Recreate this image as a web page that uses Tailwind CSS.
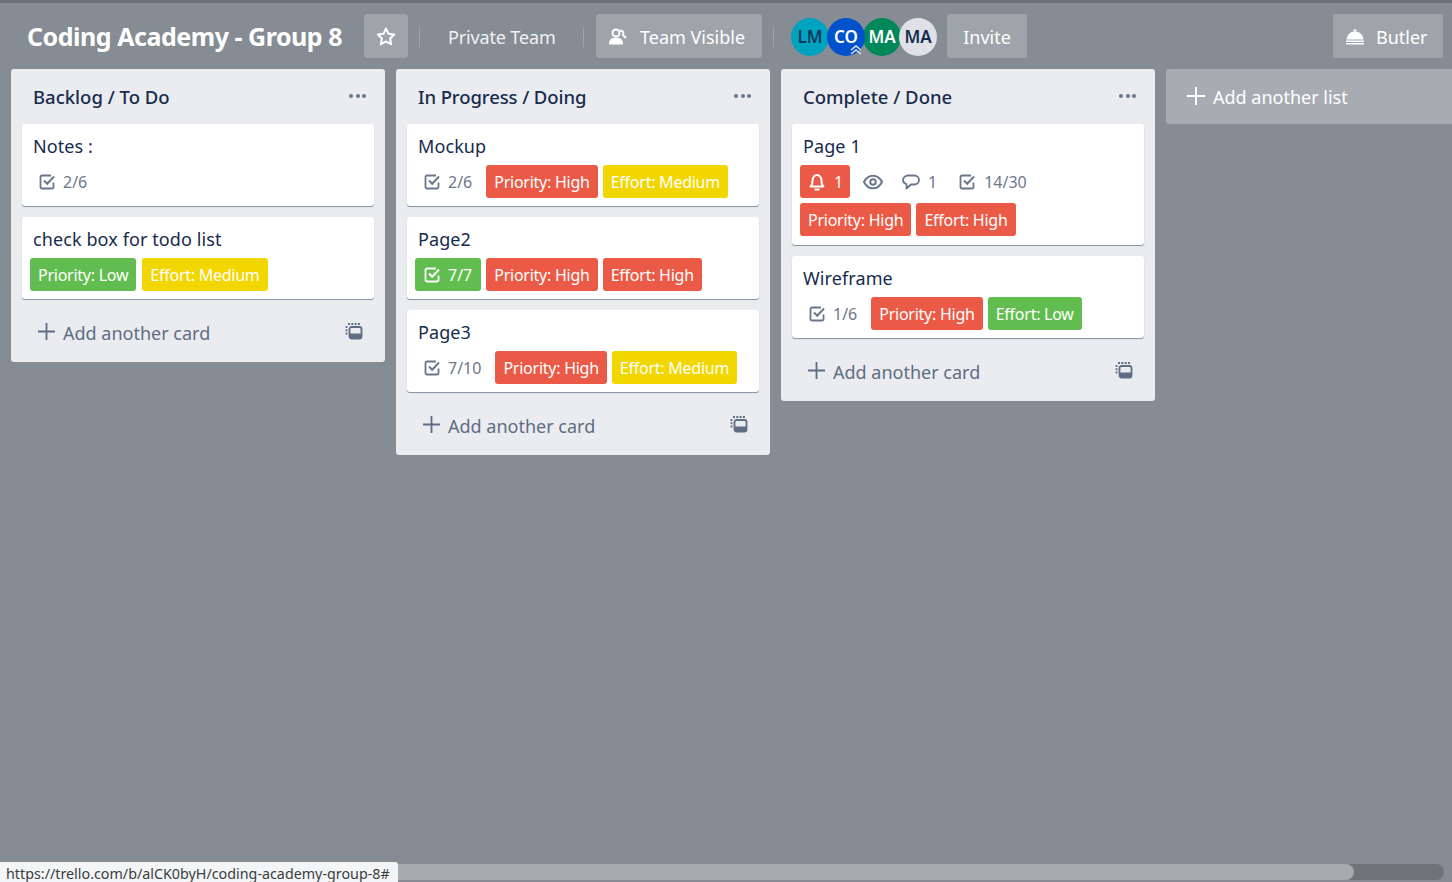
<!DOCTYPE html>
<html lang="en">
<head>
    <meta charset="UTF-8">
    <title>Coding Academy - Group 8</title>
    <script src="https://cdn.jsdelivr.net/npm/@tailwindcss/browser@4"></script>
</head>
<body class="relative w-[1452px] h-[882px] overflow-hidden bg-[#858c93] font-['Noto_Sans','Open_Sans',sans-serif] text-[#172b4d]">
<svg class="hidden">
    <symbol id="check" viewBox="0 0 18 18"><path d="M15.500 9.500V14a1.500 1.500 0 0 1-1.500 1.500H4A1.500 1.500 0 0 1 2.500 14V4A1.500 1.500 0 0 1 4 2.500h9" fill="none" stroke="currentColor" stroke-width="1.800"/><path d="M6 7.500 9.200 10.700 16 3.500" fill="none" stroke="currentColor" stroke-width="2"/></symbol>
    <symbol id="tpl" viewBox="0 0 18 18"><rect x="4.500" y="5" width="12" height="11.500" rx="2" fill="none" stroke="currentColor" stroke-width="1.800"/><rect x="4.500" y="11.500" width="12" height="5" rx="1" fill="currentColor"/><path d="M1.500 4v10" stroke="currentColor" stroke-width="1.800" stroke-dasharray="2 1.300"/><path d="M3 2h12" stroke="currentColor" stroke-width="1.800" stroke-dasharray="2 1.300"/></symbol>
</svg>

<div class="h-[3px] bg-[#6b7278]"></div>

<!-- header -->
<header class="flex items-center h-[44px] mt-[11px] pl-[27px] pr-[9px] text-white text-[18px]">
    <h1 class="text-[25px] font-bold mt-[2px] mr-[22px] whitespace-nowrap tracking-[-0.47px]">Coding Academy - Group 8</h1>
    <button class="w-[44px] h-[44px] pt-[2px] rounded-[3px] bg-[#9ea4a9] flex items-center justify-center">
        <svg width="20" height="20" viewBox="0 0 20 20" fill="none" stroke="white" stroke-width="2" stroke-linejoin="round"><path d="M10 1.500l2.500 5.200 5.700.8-4.100 4 1 5.700L10 14.500l-5.100 2.700 1-5.700-4.100-4 5.700-.8z"/></svg>
    </button>
    <div class="w-px h-[20px] bg-[#9ea4a9] mt-[2px] ml-[11px]"></div>
    <span class="ml-[28px] w-[135px] mt-[2px] whitespace-nowrap text-[#f1f2f3] tracking-[-0.15px]">Private Team</span>
    <div class="w-px h-[20px] bg-[#9ea4a9] mt-[2px]"></div>
    <button class="ml-[12px] h-[44px] w-[166px] pt-[2px] rounded-[3px] bg-[#9ea4a9] flex items-center pl-[12px] gap-[12px] whitespace-nowrap">
        <svg width="20" height="20" viewBox="0 0 20 20" fill="none" stroke="white" stroke-width="2"><circle cx="8" cy="6" r="3.500"/><path d="M12 3.500a3 3 0 0 1 3 4.500l3 3" /><path d="M2 16.500c0-3.500 2.500-5 6-5s6 1.500 6 5z" fill="white"/></svg>
        Team Visible
    </button>
    <div class="w-px h-[20px] bg-[#9ea4a9] mt-[2px] ml-[11px]"></div>
    <div class="flex ml-[17px] mt-[2px] text-[17px] font-semibold">
        <div class="w-[38px] h-[38px] rounded-full bg-[#00a3bf] text-[#0b3a5e] flex items-center justify-center">LM</div>
        <div class="relative -ml-[2px] w-[38px] h-[38px] rounded-full bg-[#0052cc] flex items-center justify-center">CO
            <svg class="absolute right-[3px] bottom-0" width="12" height="12" viewBox="0 0 12 12" fill="none" stroke="#dfe1e6" stroke-width="1.500"><path d="M1 6l5-4 5 4M1 10l5-4 5 4"/></svg>
        </div>
        <div class="-ml-[2px] w-[38px] h-[38px] rounded-full bg-[#00875a] flex items-center justify-center">MA</div>
        <div class="-ml-[2px] w-[38px] h-[38px] rounded-full bg-[#dfe1e6] text-[#172b4d] flex items-center justify-center">MA</div>
    </div>
    <button class="ml-[10px] h-[44px] w-[80px] pt-[2px] rounded-[3px] bg-[#9ea4a9] flex items-center justify-center">Invite</button>
    <button class="ml-auto h-[44px] w-[110px] pt-[2px] rounded-[3px] bg-[#9ea4a9] flex items-center pl-[12px] gap-[11px]">
        <svg width="20" height="20" viewBox="0 0 20 20" fill="white"><path d="M1.500 12.500C2 7.500 5.500 4.500 10 4.500s8 3 8.500 8z"/><rect x="8.500" y="2.500" width="3" height="2"/><rect x="1" y="13.500" width="18" height="1.500"/><rect x="1" y="16" width="18" height="1.500"/></svg>
        Butler
    </button>
</header>

<!-- lists -->
<main class="flex items-start gap-[11px] mt-[11px] pl-[11px] text-[18px]">

    <section class="w-[374px] shrink-0 bg-[#ebecf0] rounded-[3px] px-[11px] pb-[2px]">
        <div class="h-[55px] flex items-center justify-between pl-[11px] pr-[8px]">
            <h2 class="font-medium text-[18.500px]">Backlog / To Do</h2>
            <span class="flex gap-[2.500px] -mt-[1px]"><i class="w-[4px] h-[4px] rounded-full bg-[#6b778c]"></i><i class="w-[4px] h-[4px] rounded-full bg-[#6b778c]"></i><i class="w-[4px] h-[4px] rounded-full bg-[#6b778c]"></i></span>
        </div>
        <div class="flex flex-col gap-[11px]">
            <article class="h-[82px] bg-white rounded-[3px] shadow-[0_1px_0_#091e4240,0_1px_1px_#091e4240] pt-[9px] px-[11px]">
                <p class="leading-[27px] tracking-[0.1px]">Notes :</p>
                <div class="flex items-center h-[33px] mt-[5px] pl-[5px] text-[#6b778c] text-[16px] gap-[7px]"><svg width="18" height="18"><use href="#check"/></svg>2/6</div>
            </article>
            <article class="h-[82px] bg-white rounded-[3px] shadow-[0_1px_0_#091e4240,0_1px_1px_#091e4240] pt-[9px] px-[8px]">
                <p class="leading-[27px] pl-[3px] tracking-[0.1px]">check box for todo list</p>
                <div class="flex gap-[6px] mt-[5px] text-white text-[16px] whitespace-nowrap">
                    <span class="h-[33px] px-[8px] rounded-[3px] bg-[#61bd4f] flex items-center tracking-[-0.25px]">Priority: Low</span>
                    <span class="h-[33px] px-[8px] rounded-[3px] bg-[#f2d600] flex items-center tracking-[-0.25px]">Effort: Medium</span>
                </div>
            </article>
        </div>
        <div class="h-[61px] pt-[8px] flex items-center pl-[16px] pr-[11px] text-[#5e6c84]">
            <svg class="-mt-[4px]" width="17" height="17" viewBox="0 0 17 17" stroke="currentColor" stroke-width="1.800"><path d="M8.500 0v17M0 8.500h17"/></svg>
            <span class="ml-[8px]">Add another card</span>
            <svg class="ml-auto -mt-[6px]" width="18" height="18"><use href="#tpl"/></svg>
        </div>
    </section>

    <section class="w-[374px] shrink-0 bg-[#ebecf0] rounded-[3px] px-[11px] pb-[2px]">
        <div class="h-[55px] flex items-center justify-between pl-[11px] pr-[8px]">
            <h2 class="font-medium text-[18.500px] tracking-[-0.1px]">In Progress / Doing</h2>
            <span class="flex gap-[2.500px] -mt-[1px]"><i class="w-[4px] h-[4px] rounded-full bg-[#6b778c]"></i><i class="w-[4px] h-[4px] rounded-full bg-[#6b778c]"></i><i class="w-[4px] h-[4px] rounded-full bg-[#6b778c]"></i></span>
        </div>
        <div class="flex flex-col gap-[11px]">
            <article class="h-[82px] bg-white rounded-[3px] shadow-[0_1px_0_#091e4240,0_1px_1px_#091e4240] pt-[9px] px-[8px]">
                <p class="leading-[27px] pl-[3px] tracking-[0.1px]">Mockup</p>
                <div class="flex items-center gap-[5px] mt-[5px] text-white text-[16px] whitespace-nowrap">
                    <span class="flex items-center gap-[7px] h-[33px] pl-[8px] pr-[9px] text-[#6b778c]"><svg width="18" height="18"><use href="#check"/></svg>2/6</span>
                    <span class="h-[33px] px-[8px] rounded-[3px] bg-[#eb5a46] flex items-center tracking-[-0.25px]">Priority: High</span>
                    <span class="h-[33px] px-[8px] rounded-[3px] bg-[#f2d600] flex items-center tracking-[-0.25px]">Effort: Medium</span>
                </div>
            </article>
            <article class="h-[82px] bg-white rounded-[3px] shadow-[0_1px_0_#091e4240,0_1px_1px_#091e4240] pt-[9px] px-[8px]">
                <p class="leading-[27px] pl-[3px] tracking-[0.1px]">Page2</p>
                <div class="flex items-center gap-[5px] mt-[5px] text-white text-[16px] whitespace-nowrap">
                    <span class="flex items-center gap-[7px] h-[33px] pl-[8px] pr-[9px] rounded-[3px] bg-[#61bd4f]"><svg width="18" height="18"><use href="#check"/></svg>7/7</span>
                    <span class="h-[33px] px-[8px] rounded-[3px] bg-[#eb5a46] flex items-center tracking-[-0.25px]">Priority: High</span>
                    <span class="h-[33px] px-[8px] rounded-[3px] bg-[#eb5a46] flex items-center tracking-[-0.25px]">Effort: High</span>
                </div>
            </article>
            <article class="h-[82px] bg-white rounded-[3px] shadow-[0_1px_0_#091e4240,0_1px_1px_#091e4240] pt-[9px] px-[8px]">
                <p class="leading-[27px] pl-[3px] tracking-[0.1px]">Page3</p>
                <div class="flex items-center gap-[5px] mt-[5px] text-white text-[16px] whitespace-nowrap">
                    <span class="flex items-center gap-[7px] h-[33px] pl-[8px] pr-[9px] text-[#6b778c]"><svg width="18" height="18"><use href="#check"/></svg>7/10</span>
                    <span class="h-[33px] px-[8px] rounded-[3px] bg-[#eb5a46] flex items-center tracking-[-0.25px]">Priority: High</span>
                    <span class="h-[33px] px-[8px] rounded-[3px] bg-[#f2d600] flex items-center tracking-[-0.25px]">Effort: Medium</span>
                </div>
            </article>
        </div>
        <div class="h-[61px] pt-[8px] flex items-center pl-[16px] pr-[11px] text-[#5e6c84]">
            <svg class="-mt-[4px]" width="17" height="17" viewBox="0 0 17 17" stroke="currentColor" stroke-width="1.800"><path d="M8.500 0v17M0 8.500h17"/></svg>
            <span class="ml-[8px]">Add another card</span>
            <svg class="ml-auto -mt-[6px]" width="18" height="18"><use href="#tpl"/></svg>
        </div>
    </section>

    <section class="w-[374px] shrink-0 bg-[#ebecf0] rounded-[3px] px-[11px] pb-[2px]">
        <div class="h-[55px] flex items-center justify-between pl-[11px] pr-[8px]">
            <h2 class="font-medium text-[18.500px]">Complete / Done</h2>
            <span class="flex gap-[2.500px] -mt-[1px]"><i class="w-[4px] h-[4px] rounded-full bg-[#6b778c]"></i><i class="w-[4px] h-[4px] rounded-full bg-[#6b778c]"></i><i class="w-[4px] h-[4px] rounded-full bg-[#6b778c]"></i></span>
        </div>
        <div class="flex flex-col gap-[11px]">
            <article class="h-[121px] bg-white rounded-[3px] shadow-[0_1px_0_#091e4240,0_1px_1px_#091e4240] pt-[9px] px-[8px]">
                <p class="leading-[27px] pl-[3px] tracking-[0.1px]">Page 1</p>
                <div class="flex items-center mt-[5px] text-[#6b778c] text-[16px]">
                    <span class="flex items-center gap-[8px] h-[33px] w-[50px] pl-[8px] rounded-[3px] bg-[#eb5a46] text-white">
                        <svg width="18" height="18" viewBox="0 0 18 18" fill="none" stroke="white" stroke-width="2" stroke-linejoin="round"><path d="M2.500 13.500c2-1.500 2-3.500 2-6 0-3 2-5.500 4.500-5.500s4.500 2.500 4.500 5.500c0 2.500 0 4.500 2 6z"/><path d="M6.500 16.500h5"/></svg>1
                    </span>
                    <svg class="ml-[13px]" width="20" height="20" viewBox="0 0 20 20" fill="none" stroke="currentColor" stroke-width="2"><path d="M1 10C3 6 6.200 3.700 10 3.700S17 6 19 10c-2 4-5.200 6.300-9 6.300S3 14 1 10z"/><circle cx="10" cy="10" r="2.800"/></svg>
                    <svg class="ml-[19px]" width="18" height="18" viewBox="0 0 18 18" fill="none" stroke="currentColor" stroke-width="1.800" stroke-linejoin="round"><path d="M6 2.500h6.500c2.500 0 4.500 2 4.500 4.500s-2 4.500-4.500 4.500H9l-4.500 4V11C2.500 10.500 1 9 1 7c0-2.500 2.500-4.500 5-4.500z"/></svg>
                    <span class="ml-[8px]">1</span>
                    <svg class="ml-[21px]" width="18" height="18"><use href="#check"/></svg>
                    <span class="ml-[8px]">14/30</span>
                </div>
                <div class="flex gap-[5px] mt-[5px] text-white text-[16px] whitespace-nowrap">
                    <span class="h-[33px] px-[8px] rounded-[3px] bg-[#eb5a46] flex items-center tracking-[-0.25px]">Priority: High</span>
                    <span class="h-[33px] px-[8px] rounded-[3px] bg-[#eb5a46] flex items-center tracking-[-0.25px]">Effort: High</span>
                </div>
            </article>
            <article class="h-[82px] bg-white rounded-[3px] shadow-[0_1px_0_#091e4240,0_1px_1px_#091e4240] pt-[9px] px-[8px]">
                <p class="leading-[27px] pl-[3px] tracking-[0.1px]">Wireframe</p>
                <div class="flex items-center gap-[5px] mt-[5px] text-white text-[16px] whitespace-nowrap">
                    <span class="flex items-center gap-[7px] h-[33px] pl-[8px] pr-[9px] text-[#6b778c]"><svg width="18" height="18"><use href="#check"/></svg>1/6</span>
                    <span class="h-[33px] px-[8px] rounded-[3px] bg-[#eb5a46] flex items-center tracking-[-0.25px]">Priority: High</span>
                    <span class="h-[33px] px-[8px] rounded-[3px] bg-[#61bd4f] flex items-center tracking-[-0.25px]">Effort: Low</span>
                </div>
            </article>
        </div>
        <div class="h-[61px] pt-[8px] flex items-center pl-[16px] pr-[11px] text-[#5e6c84]">
            <svg class="-mt-[4px]" width="17" height="17" viewBox="0 0 17 17" stroke="currentColor" stroke-width="1.800"><path d="M8.500 0v17M0 8.500h17"/></svg>
            <span class="ml-[8px]">Add another card</span>
            <svg class="ml-auto -mt-[6px]" width="18" height="18"><use href="#tpl"/></svg>
        </div>
    </section>

    <button class="w-[286px] h-[55px] shrink-0 pt-[2px] bg-[#a7acb2] rounded-l-[3px] flex items-center pl-[21px] text-white">
        <svg class="-mt-[4px]" width="18" height="18" viewBox="0 0 18 18" stroke="white" stroke-width="2"><path d="M9 0v18M0 9h18"/></svg>
        <span class="ml-[8px]">Add another list</span>
    </button>
</main>

<!-- scrollbar and status bubble -->
<div class="absolute left-0 right-[8px] bottom-[2px] h-[16px] rounded-r-[8px] bg-[#6e7579] overflow-hidden">
    <div class="w-[1354px] h-full rounded-r-[8px] bg-[#a6abae]"></div>
</div>
<div class="absolute left-0 bottom-0 h-[20px] w-[398px] bg-[#f4f5f6] rounded-tr-[3px] pl-[6px] text-[14.300px] leading-[24px] text-[#3a3d40] overflow-hidden whitespace-nowrap">https://trello.com/b/alCK0byH/coding-academy-group-8#</div>
</body>
</html>
